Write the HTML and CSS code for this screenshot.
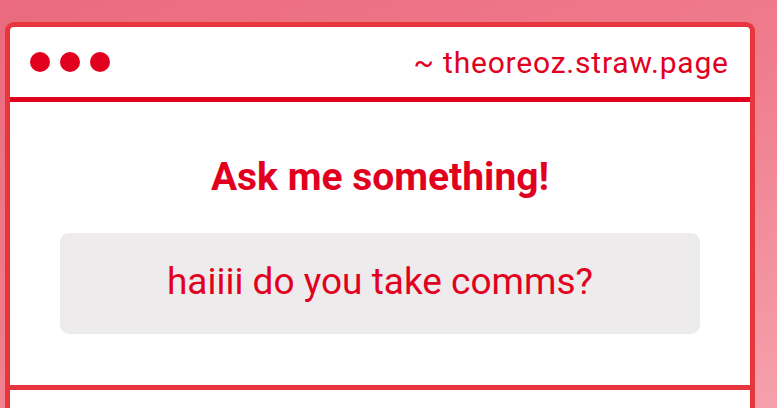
FILE: index.html
```html
<!DOCTYPE html>
<html lang="en">
<head>
  <meta charset="UTF-8" />
  <meta name="viewport" content="width=device-width, initial-scale=1.0"/>
  <title>Ask me something! - theoreoz.straw.page</title>
  <link rel="stylesheet" href="styles.css">
</head>
<body>
  <div class="window">
    <div class="titlebar">
      <div class="dots">
        <span class="dot"></span>
        <span class="dot"></span>
        <span class="dot"></span>
      </div>
      <div class="url">~ theoreoz.straw.page</div>
    </div>

    <div class="ask">
      <h1>Ask me something!</h1>
      <div class="question">haiiii do you take comms?</div>
    </div>

    <div class="next"></div>
  </div>
</body>
</html>
```

FILE: styles.css
```css
body {
  margin: 0;
  height: 408px;
  overflow: hidden;
  padding: 22px 22px 0 5px;
  box-sizing: border-box;
  background: linear-gradient(160deg, #eb6a7d 0%, #ef7d8d 50%, #f5a1ab 100%);
  font-family: Roboto, 'Noto Sans', sans-serif;
  color: #e2001f;
}

.window {
  width: 750px;
  background: #fff;
  border: 5px solid #e8363f;
  border-bottom: 0;
  border-radius: 9px 9px 0 0;
  box-sizing: border-box;
}

.titlebar {
  display: flex;
  align-items: center;
  justify-content: space-between;
  height: 70px;
  padding: 0 22px 0 20px;
  border-bottom: 5px solid #e2001f;
}

.dots {
  display: flex;
  gap: 10px;
}

.dot {
  width: 20px;
  height: 20px;
  border-radius: 50%;
  background: #e2001f;
}

.url {
  font-size: 30px;
  letter-spacing: 0.8px;
  margin-right: -0.8px;
}

.ask {
  padding: 56px 50px 51px;
  border-bottom: 5px solid #e8363f;
  text-align: center;
}

h1 {
  margin: 0 0 36px;
  font-size: 39px;
  line-height: 1;
  font-weight: 700;
}

.question {
  background: #edebec;
  border-radius: 9px;
  padding: 30px 0 34px;
  font-size: 37px;
  line-height: 37px;
}

.next {
  height: 30px;
}
```
